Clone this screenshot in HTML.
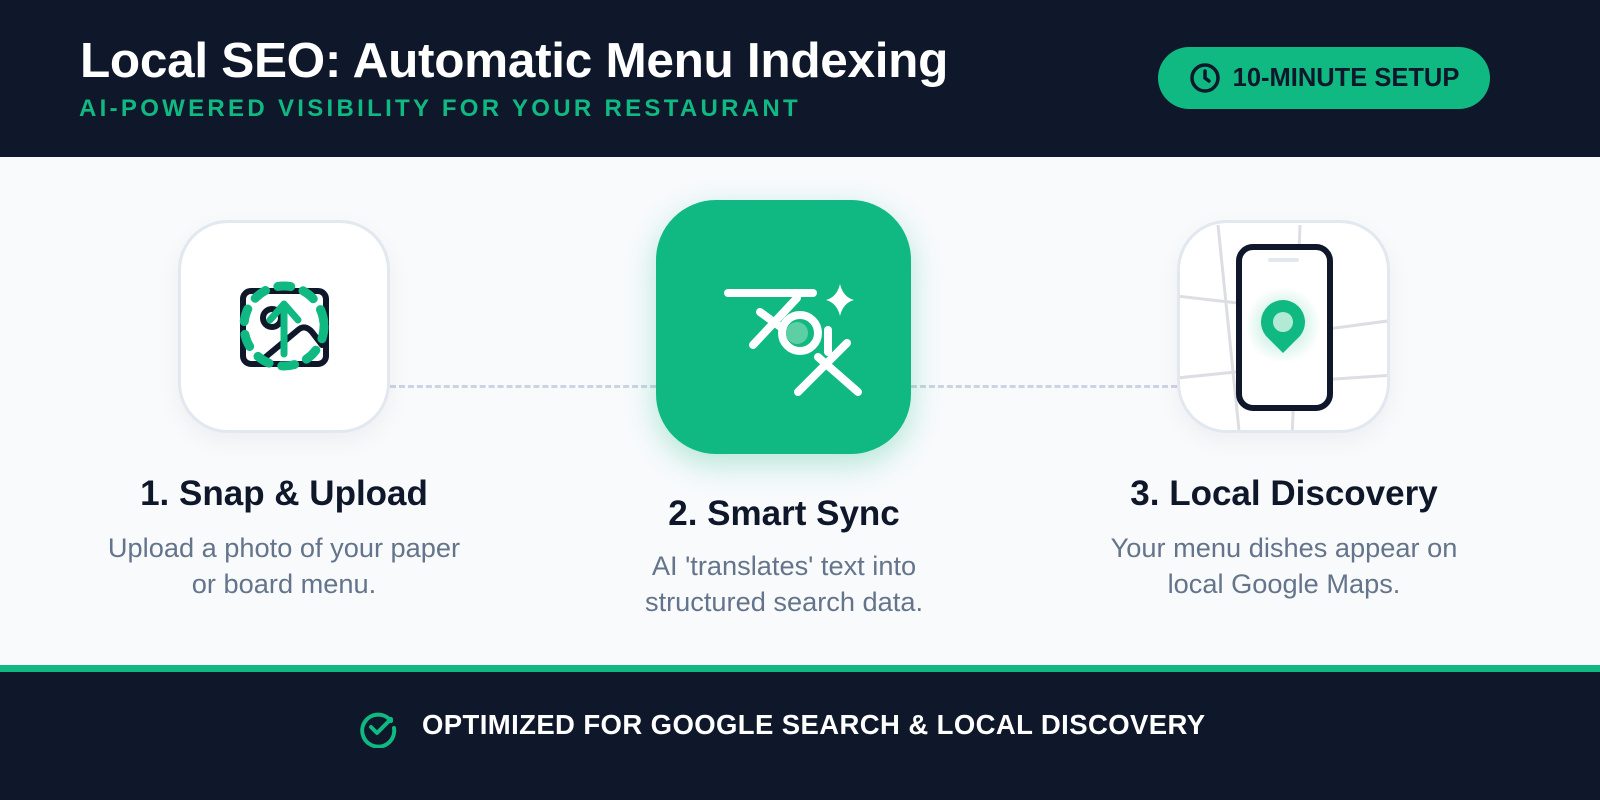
<!DOCTYPE html>
<html><head><meta charset="utf-8"><style>
*{margin:0;padding:0;box-sizing:border-box}
body{width:1600px;height:800px;overflow:hidden;background:#f8fafc;font-family:"Liberation Sans",Arial,sans-serif;position:relative}
.hdr{position:absolute;left:0;top:0;width:1600px;height:157px;background:#0f172a}
.h1{position:absolute;left:80px;top:32px;font-size:49.5px;font-weight:bold;color:#fff;letter-spacing:-0.3px}
.sub{position:absolute;left:79px;top:95px;font-size:24px;font-weight:bold;color:#10b981;letter-spacing:3.3px}
.badge{position:absolute;left:1158px;top:47px;width:332px;height:62px;border-radius:31px;background:#10b981;color:#0f172a;font-size:25.5px;font-weight:bold;display:flex;align-items:center;justify-content:center;gap:12px}
.card{position:absolute;background:#fff;border:3px solid #e2e8f0;border-radius:50px;box-shadow:0 8px 24px rgba(15,23,42,0.05);overflow:hidden}
.dash{position:absolute;top:385px;height:0;border-top:3px dashed #cbd5e1}
.t{position:absolute;text-align:center;font-weight:bold;color:#0f172a;font-size:35px;width:500px}
.d{position:absolute;text-align:center;color:#64748b;font-size:27.2px;line-height:36px;width:500px}
.gl{position:absolute;left:0;top:665px;width:1600px;height:7px;background:#10b981}
.ftr{position:absolute;left:0;top:672px;width:1600px;height:128px;background:#0f172a}
.ft{position:absolute;left:422px;top:709px;color:#fff;font-size:27.5px;font-weight:bold;letter-spacing:0.4px}
</style></head><body>
<div class="hdr"></div>
<div class="h1">Local SEO: Automatic Menu Indexing</div>
<div class="sub">AI-POWERED VISIBILITY FOR YOUR RESTAURANT</div>
<div class="badge"><svg width="32" height="32" viewBox="0 0 32 32"><circle cx="16" cy="16" r="13" fill="none" stroke="#0f172a" stroke-width="3.5"/><path d="M16 9v7l4 3" fill="none" stroke="#0f172a" stroke-width="3.5" stroke-linecap="round"/></svg>10-MINUTE SETUP</div>

<div class="dash" style="left:390px;width:266px"></div>
<div class="dash" style="left:911px;width:266px"></div>

<div class="card" style="left:178px;top:220px;width:212px;height:213px">
<svg width="212" height="213" viewBox="178 220 212 213" style="position:absolute;left:-3px;top:-3px">
<rect x="243" y="291" width="83" height="73" rx="8" fill="none" stroke="#0f172a" stroke-width="6"/>
<circle cx="272" cy="318" r="9" fill="none" stroke="#0f172a" stroke-width="6"/>
<path d="M262 360 L298 330 Q305 324 312 332 L322 345" fill="none" stroke="#0f172a" stroke-width="6" stroke-linecap="round"/>
<circle cx="284" cy="326" r="40" fill="none" stroke="#10b981" stroke-width="9" stroke-dasharray="13 13" stroke-linecap="round"/>
<path d="M284 354 V304 M270 320 L284 304 L298 320" fill="none" stroke="#10b981" stroke-width="7" stroke-linecap="round" stroke-linejoin="round"/>
</svg></div>

<div class="card" style="left:656px;top:200px;width:255px;height:254px;background:#10b981;border:none;border-radius:60px;box-shadow:0 10px 30px rgba(16,185,129,0.3)">
<svg width="255" height="254" viewBox="656 200 255 254" style="position:absolute;left:0;top:0">
<g fill="none" stroke="#fff" stroke-width="8" stroke-linecap="round">
<path d="M728 293 H813"/>
<path d="M797 298 L753 345"/>
<path d="M760 312 L782 328"/>
<circle cx="800" cy="333" r="18"/>
<path d="M828 330 V352"/>
<path d="M798 392 L847 343"/>
<path d="M818 357 L858 392"/>
</g>
<circle cx="797" cy="333" r="11" fill="#5ccfa5"/>
<path d="M840 284 Q843 297 854 300 Q843 303 840 316 Q837 303 826 300 Q837 297 840 284Z" fill="#fff"/>
</svg></div>

<div class="card" style="left:1177px;top:220px;width:213px;height:213px">
<svg width="213" height="213" viewBox="1177 220 213 213" style="position:absolute;left:-3px;top:-3px">
<defs><radialGradient id="g"><stop offset="0" stop-color="#10b981" stop-opacity="0.35"/><stop offset="1" stop-color="#10b981" stop-opacity="0"/></radialGradient></defs>
<g stroke="#dcdee3" stroke-width="3" fill="none">
<path d="M1218 225 L1240 440"/><path d="M1300 225 L1292 440"/>
<path d="M1177 296 L1255 305"/><path d="M1177 378 L1255 370"/>
<path d="M1320 330 L1395 320"/><path d="M1320 380 L1395 375"/>
</g>
<rect x="1239" y="247" width="91" height="161" rx="14" fill="#fff" stroke="#0f172a" stroke-width="6"/>
<path d="M1270 260 H1297" stroke="#e2e8f0" stroke-width="4" stroke-linecap="round"/>
<circle cx="1283" cy="325" r="38" fill="url(#g)"/>
<path d="M1283 353 L1266 336 A22 22 0 1 1 1300 336 Z" fill="#10b981"/>
<circle cx="1283" cy="322" r="10" fill="#b3ead5"/>
</svg></div>

<div class="t" style="left:34px;top:474px">1. Snap &amp; Upload</div>
<div class="d" style="left:34px;top:530px">Upload a photo of your paper<br>or board menu.</div>
<div class="t" style="left:534px;top:494px">2. Smart Sync</div>
<div class="d" style="left:534px;top:548px">AI 'translates' text into<br>structured search data.</div>
<div class="t" style="left:1034px;top:474px">3. Local Discovery</div>
<div class="d" style="left:1034px;top:530px">Your menu dishes appear on<br>local Google Maps.</div>

<div class="gl"></div>
<div class="ftr"></div>
<svg style="position:absolute;left:358px;top:708px" width="40" height="40" viewBox="0 0 40 40"><path d="M33 13 A16 16 0 1 0 36 20" fill="none" stroke="#10b981" stroke-width="4" stroke-linecap="round"/><path d="M13 19 L19 25 L33 11" fill="none" stroke="#10b981" stroke-width="4" stroke-linecap="round" stroke-linejoin="round"/></svg>
<div class="ft">OPTIMIZED FOR GOOGLE SEARCH &amp; LOCAL DISCOVERY</div>
</body></html>
